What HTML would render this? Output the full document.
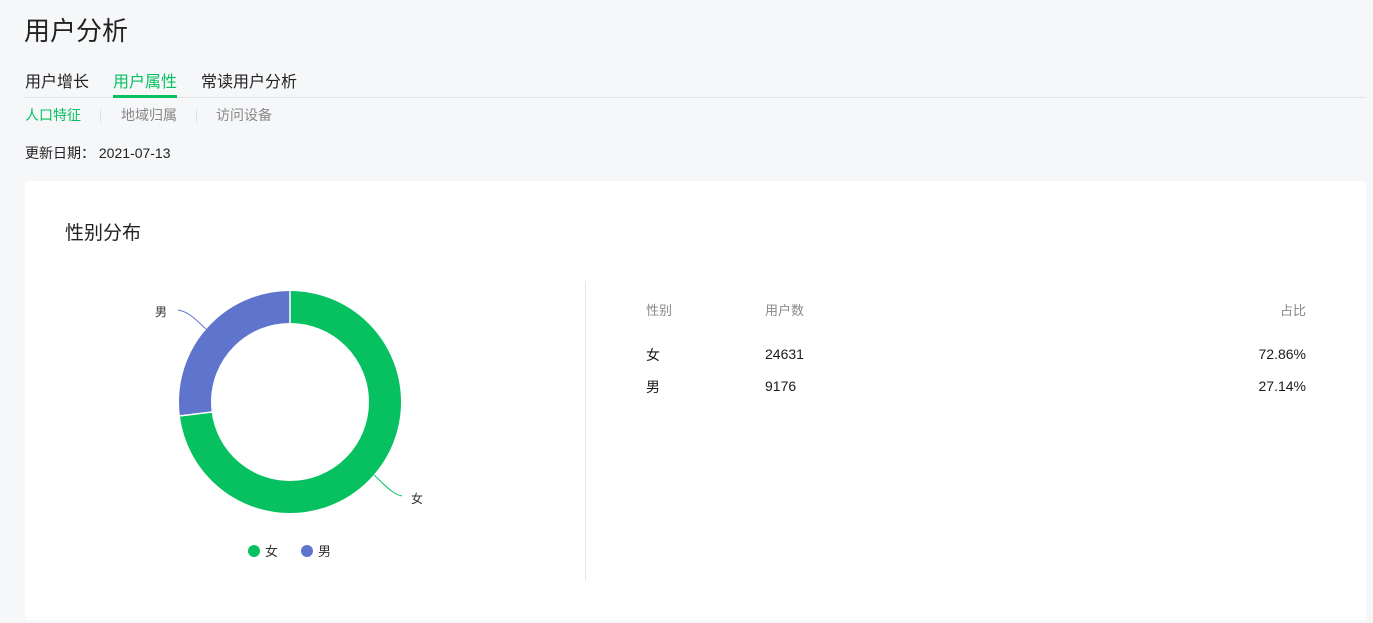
<!DOCTYPE html>
<html><head><meta charset="utf-8"><style>
*{margin:0;padding:0;box-sizing:border-box}
body{width:1373px;height:623px;background:#f6f7f9;font-family:"Liberation Sans","Noto Sans CJK SC",sans-serif;color:#1a1a1a;position:relative;overflow:hidden}
.a{position:absolute;white-space:nowrap}
</style></head><body>
<div class="a" style="left:24px;top:11px;font-size:26px;color:#222">用户分析</div>
<div class="a" style="left:25px;top:68px;font-size:16px;color:#222">用户增长</div>
<div class="a" style="left:113px;top:68px;font-size:16px;color:#07c160">用户属性</div>
<div class="a" style="left:201px;top:68px;font-size:16px;color:#222">常读用户分析</div>
<div class="a" style="left:25px;top:97px;width:1340px;height:1px;background:#e2e2e2"></div>
<div class="a" style="left:113px;top:95px;width:64px;height:3px;background:#07c160"></div>
<div class="a" style="left:25px;top:105px;font-size:14px;color:#07c160">人口特征</div>
<div class="a" style="left:100px;top:109px;width:1px;height:14px;background:#e0e0e0"></div>
<div class="a" style="left:121px;top:105px;font-size:14px;color:#888">地域归属</div>
<div class="a" style="left:196px;top:109px;width:1px;height:14px;background:#e0e0e0"></div>
<div class="a" style="left:216px;top:105px;font-size:14px;color:#888">访问设备</div>
<div class="a" style="left:25px;top:143px;font-size:14px;color:#222">更新日期：&nbsp;2021-07-13</div>
<div class="a" style="left:25px;top:181px;width:1341px;height:439px;background:#fff;border-radius:4px"></div>
<div class="a" style="left:65px;top:218px;font-size:19px;color:#222">性别分布</div>
<div class="a" style="left:585px;top:281px;width:1px;height:299px;background:#e6e6e6"></div>
<svg class="a" style="left:0;top:0" width="600" height="623">
<g transform="rotate(-90 290 402)">
<circle cx="290" cy="402" r="95" fill="none" stroke="#07c160" stroke-width="32" stroke-dasharray="434.9 596.9"/>
<circle cx="290" cy="402" r="95" fill="none" stroke="#5f74cd" stroke-width="32" stroke-dasharray="162 596.9" stroke-dashoffset="-434.9"/>
</g>
<line x1="290" y1="290" x2="290" y2="324" stroke="#fff" stroke-width="1.5"/>
<line x1="179" y1="416" x2="212" y2="412" stroke="#fff" stroke-width="1.5"/>
<path d="M178 310 C190 312 198 322 206 329" fill="none" stroke="#5f74cd" stroke-width="1"/>
<path d="M374 475 C385 485 392 494 402 496" fill="none" stroke="#07c160" stroke-width="1"/>
<text x="155" y="316" font-size="12" fill="#333">男</text>
<text x="411" y="503" font-size="12" fill="#333">女</text>
<circle cx="254" cy="551" r="6" fill="#07c160"/>
<text x="265" y="556" font-size="13" fill="#333">女</text>
<circle cx="307" cy="551" r="6" fill="#5f74cd"/>
<text x="318" y="556" font-size="13" fill="#333">男</text>
</svg>
<div class="a" style="left:646px;top:300px;font-size:13px;color:#888">性别</div>
<div class="a" style="left:765px;top:300px;font-size:13px;color:#888">用户数</div>
<div class="a" style="right:67px;top:300px;font-size:13px;color:#888">占比</div>
<div class="a" style="left:646px;top:345px;font-size:14px">女</div>
<div class="a" style="left:765px;top:346px;font-size:14px">24631</div>
<div class="a" style="right:67px;top:346px;font-size:14px">72.86%</div>
<div class="a" style="left:646px;top:377px;font-size:14px">男</div>
<div class="a" style="left:765px;top:378px;font-size:14px">9176</div>
<div class="a" style="right:67px;top:378px;font-size:14px">27.14%</div>
</body></html>
